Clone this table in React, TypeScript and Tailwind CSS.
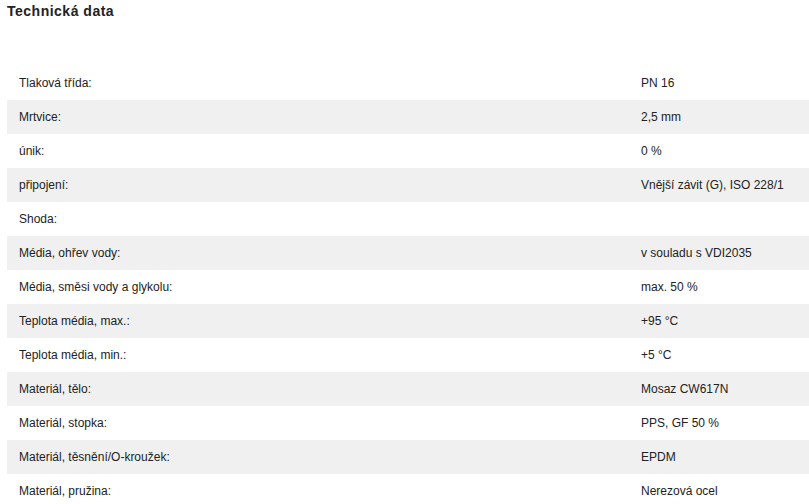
import React from "react";

const rows: [string, string][] = [
  ["Tlaková třída:", "PN 16"],
  ["Mrtvice:", "2,5 mm"],
  ["únik:", "0 %"],
  ["připojení:", "Vnější závit (G), ISO 228/1"],
  ["Shoda:", ""],
  ["Média, ohřev vody:", "v souladu s VDI2035"],
  ["Média, směsi vody a glykolu:", "max. 50 %"],
  ["Teplota média, max.:", "+95 °C"],
  ["Teplota média, min.:", "+5 °C"],
  ["Materiál, tělo:", "Mosaz CW617N"],
  ["Materiál, stopka:", "PPS, GF 50 %"],
  ["Materiál, těsnění/O-kroužek:", "EPDM"],
  ["Materiál, pružina:", "Nerezová ocel"],
];

export default function App() {
  return (
    <div
      className="w-[809px] h-[504px] overflow-hidden bg-white text-[#222]"
      style={{ fontFamily: '"Liberation Sans", Arial, sans-serif' }}
    >
      <h2 className="pl-[7px] pt-[2px] h-[66px] text-[14px] font-bold tracking-[0.5px] leading-[18px]">
        Technická data
      </h2>
      <div className="ml-[7px] flex flex-col">
        {rows.map(([k, v], i) => (
          <div
            key={i}
            className={`flex h-[34px] items-center text-[12px] leading-[16px] ${
              i % 2 === 1 ? "bg-[#f0f0f0]" : "bg-white"
            }`}
          >
            <div className="w-[622px] pl-[12px]">{k}</div>
            <div className="pl-[12px]">{v}</div>
          </div>
        ))}
      </div>
    </div>
  );
}
